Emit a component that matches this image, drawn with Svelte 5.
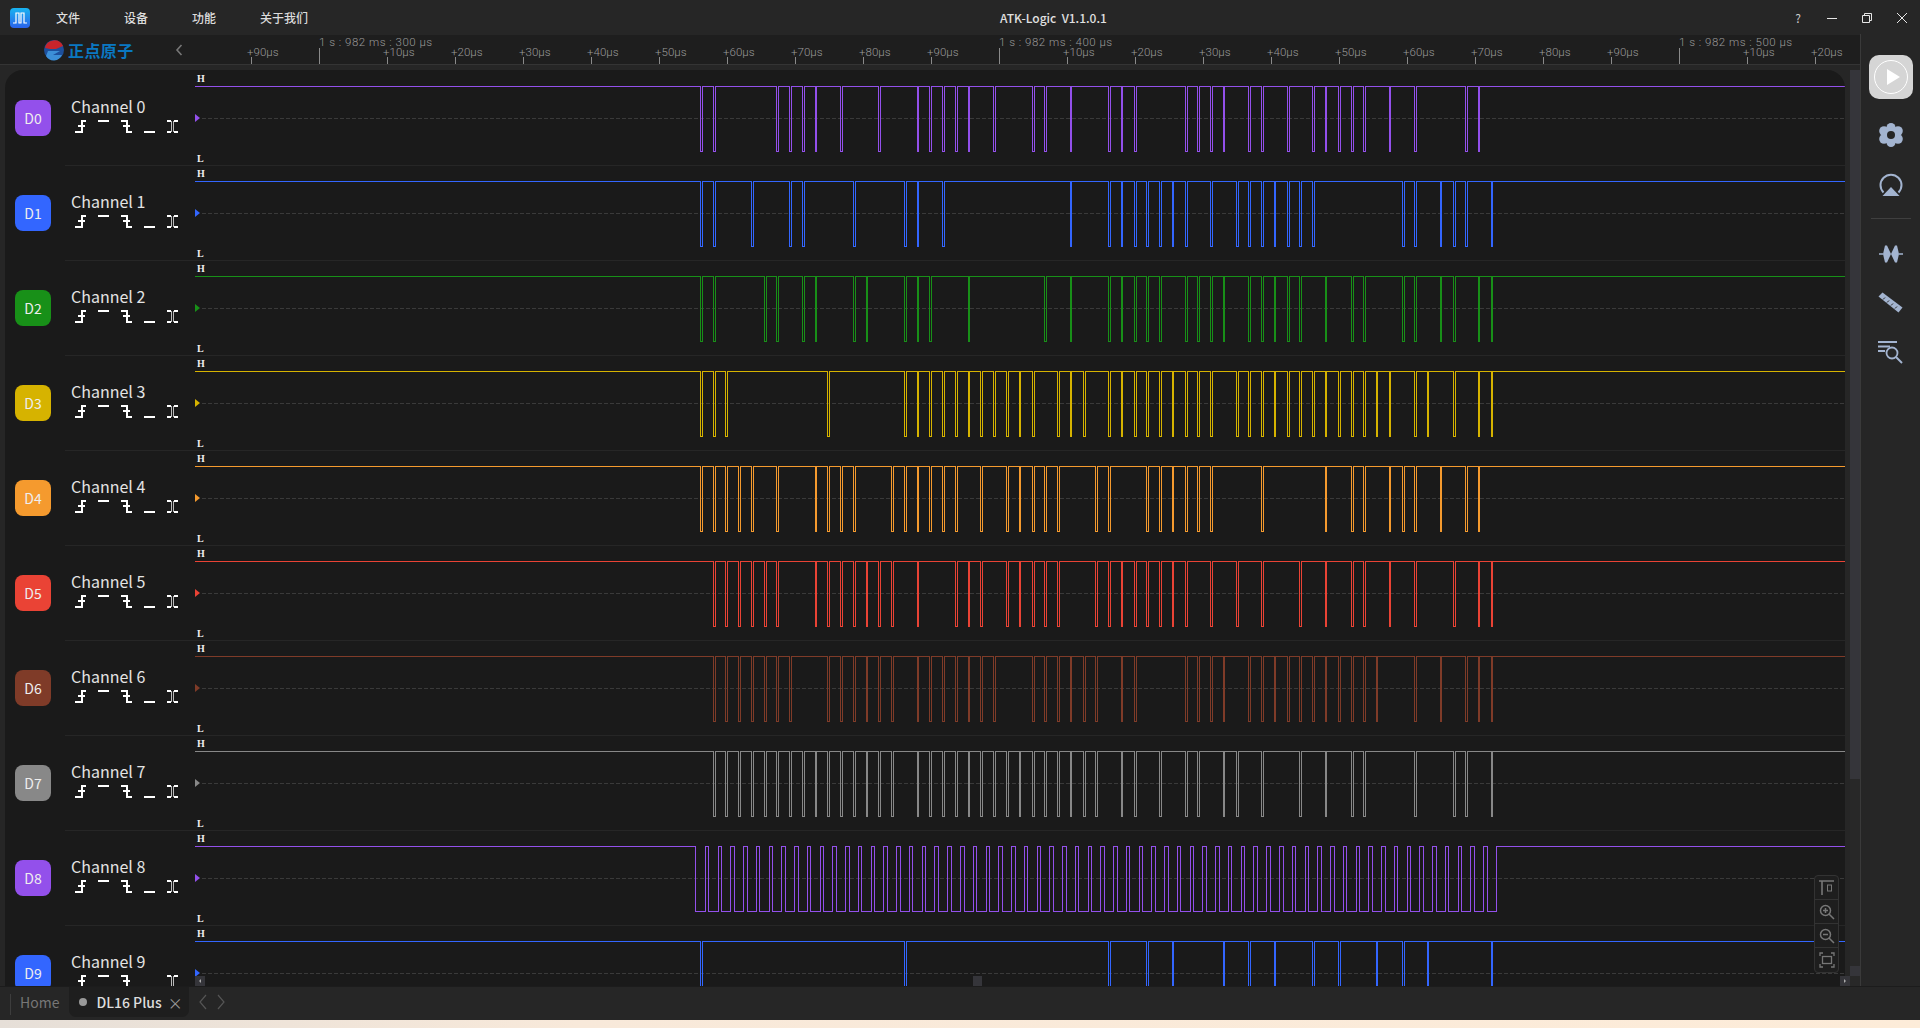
<script>
	const WAVE_LEFT = 195;
	const HIGH = 16.5;
	const LOW = 81.5;
	const WAVE_W = 1650;

	function r(a, b) {
		const out = [];
		for (let i = a; i <= b; i++) out.push(i);
		return out;
	}

	const channels = [
		{ name: 'Channel 0', tag: 'D0', color: '#9350eb', k: [0,1,6,7,8,9,11,14,17,18,19,20,21,23,26,27,29,32,33,34,38,39,40,41,43,44,46,48,49,50,51,52,54,56,60,61] },
		{ name: 'Channel 1', tag: 'D1', color: '#3366ff', k: [0,1,4,7,8,12,16,17,19,29,32,33,34,35,36,37,38,40,42,43,44,45,46,47,48,55,56,58,59,60,62] },
		{ name: 'Channel 2', tag: 'D2', color: '#189018', k: [0,1,5,6,8,9,12,13,16,17,18,21,27,29,32,33,34,35,36,38,39,40,41,43,44,45,46,47,49,51,52,55,56,58,59,61,62] },
		{ name: 'Channel 3', tag: 'D3', color: '#d6b300', k: [0,1,2,10,16,17,18,19,20,21,22,23,24,25,26,28,29,30,32,33,34,35,36,37,38,39,40,42,43,44,45,46,47,48,49,50,51,52,53,54,56,57,59,61,62] },
		{ name: 'Channel 4', tag: 'D4', color: '#f59a2e', k: [0,1,2,3,4,6,9,10,11,12,15,16,17,18,19,20,22,24,25,26,27,28,31,32,35,36,37,38,39,40,44,49,51,52,54,55,56,58,60,61] },
		{ name: 'Channel 5', tag: 'D5', color: '#ea4335', k: [1,2,3,4,5,6,9,10,11,12,13,14,15,17,20,21,22,24,25,26,27,28,31,32,33,34,35,36,37,38,40,42,44,47,49,51,52,54,56,59,61,62] },
		{ name: 'Channel 6', tag: 'D6', color: '#7f3b28', k: [1,2,3,4,5,6,7,10,11,12,13,14,15,17,18,19,20,21,22,23,26,27,28,29,30,31,33,34,38,39,40,41,43,44,45,46,47,48,49,50,51,52,53,56,58,60,61,62] },
		{ name: 'Channel 7', tag: 'D7', color: '#888888', k: [...r(1, 15), ...r(17, 31), 33,34,36,38,39,41,42,44,47,49,51,52,56,59,60,62] },
		{ name: 'Channel 8', tag: 'D8', color: '#9350eb', clock: true },
		{ name: 'Channel 9', tag: 'D9', color: '#3366ff', k: [0,16,32,35,37,41,43,45,48,50,53,55,57,62] }
	];

	// narrow pulses collapse into a solid 2px bar at this zoom level
	function isSolid(k) {
		return (k >= 9 && k % 4 === 1) || (k >= 54 && k % 4 === 2);
	}

	function pulsePath(list) {
		let d = `M0 ${HIGH}`;
		for (const k of list) {
			const x = Math.floor(700.25 + 12.76 * k) - WAVE_LEFT + 0.5;
			const w = isSolid(k) ? 1 : 2;
			d += `H${x}V${LOW}H${x + w}V${HIGH}`;
		}
		return d + `H${WAVE_W}`;
	}

	function clockPath() {
		let d = `M0 ${HIGH}H${695.5 - WAVE_LEFT}V${LOW}`;
		for (let j = 0; j < 62; j++) {
			const up = Math.floor(705.3 + 12.76 * j) - WAVE_LEFT + 0.5;
			const down = Math.floor(708.8 + 12.76 * j) - WAVE_LEFT + 0.5;
			d += `H${up}V${HIGH}H${down}V${LOW}`;
		}
		const last = Math.floor(705.3 + 12.76 * 62) - WAVE_LEFT + 0.5;
		return d + `H${last}V${HIGH}H${WAVE_W}`;
	}

	const ticks = r(0, 23).map((n) => {
		const x = 56.5 + 68 * n;
		const major = (n - 1) % 10 === 0;
		const value = (((n - 1) % 10) + 10) % 10;
		return { x, major, label: `+${value}0µs` };
	});
	const majors = [
		{ x: 124, label: '1 s : 982 ms : 300 µs' },
		{ x: 804, label: '1 s : 982 ms : 400 µs' },
		{ x: 1484, label: '1 s : 982 ms : 500 µs' }
	];
</script>

<div class="app">
	<header class="titlebar">
		<svg class="app-icon" width="20" height="20" viewBox="0 0 20 20">
			<defs>
				<linearGradient id="appblue" x1="0" y1="0" x2="0" y2="1">
					<stop offset="0" stop-color="#18b4f0" />
					<stop offset="1" stop-color="#2a62ea" />
				</linearGradient>
			</defs>
			<rect width="20" height="20" rx="4" fill="url(#appblue)" />
			<path d="M3 15h3V5h3v10h2V5h3v10h3" fill="none" stroke="#fff" stroke-width="1.2" />
		</svg>
		<nav class="menu">
			<span>文件</span>
			<span>设备</span>
			<span>功能</span>
			<span>关于我们</span>
		</nav>
		<div class="title">ATK-Logic&nbsp; V1.1.0.1</div>
		<div class="winctl">
			<span class="help">?</span>
			<svg width="12" height="12" viewBox="0 0 12 12"><path d="M1 6.5h10" stroke="#e6e6e6" fill="none" /></svg>
			<svg width="12" height="12" viewBox="0 0 12 12"><path d="M1.5 3.5h7v7h-7zM3.5 3.5v-2h7v7h-2" stroke="#e6e6e6" fill="none" /></svg>
			<svg width="12" height="12" viewBox="0 0 12 12"><path d="M1 1l10 10M11 1L1 11" stroke="#e6e6e6" fill="none" /></svg>
		</div>
	</header>

	<div class="body">
		<main class="main">
			<div class="ruler">
				<div class="brand">
					<svg width="22" height="22" viewBox="0 0 22 22">
						<circle cx="11" cy="11" r="10" fill="#1d4f9c" />
						<path d="M2 9a9.5 9.5 0 0 1 18-2L13 10H7z" fill="#c8242c" />
						<path d="M5 12h12l-7 4h9a9 9 0 0 1-16 1z" fill="#3c8fd8" />
					</svg>
					<span class="brand-name">正点原子</span>
					<svg class="collapse" width="8" height="12" viewBox="0 0 8 12"><path d="M6.5 1L2 6l4.500 5" fill="none" stroke="#777" stroke-width="1.600" /></svg>
				</div>
				<svg class="scale" width="1665" height="30">
					{#each ticks as t}
						<line x1={t.x} x2={t.x} y1={t.major ? 13 : 22} y2="29" stroke="#8a8a8a" />
						{#if !t.major}
							<text x={t.x - 4.500} y="20.500" class="tick-label">{t.label}</text>
						{/if}
					{/each}
					{#each majors as m}
						<text x={m.x} y="10.500" class="major-label">{m.label}</text>
					{/each}
				</svg>
			</div>

			<div class="viewport">
				<div class="panel">
					{#each channels as ch}
						<section class="row">
							<div class="badge" style:background={ch.color}>{ch.tag}</div>
							<div class="row-body">
								<div class="info">
									<div class="name">{ch.name}</div>
									<div class="triggers">
										<svg width="12" height="13" viewBox="0 0 12 13"><path d="M0 12h7V1h4M3 6h7" fill="none" stroke="#fff" stroke-width="2" /></svg>
										<svg width="12" height="13" viewBox="0 0 12 13"><path d="M0 1h11" fill="none" stroke="#fff" stroke-width="2" /></svg>
										<svg width="12" height="13" viewBox="0 0 12 13"><path d="M0 1h6v11h5M2 6h7" fill="none" stroke="#fff" stroke-width="2" /></svg>
										<svg width="12" height="13" viewBox="0 0 12 13"><path d="M0 12h11" fill="none" stroke="#fff" stroke-width="2" /></svg>
										<svg width="12" height="13" viewBox="0 0 12 13"><path d="M0 1h4M7 1h4M0 12h4M7 12h4" fill="none" stroke="#fff" stroke-width="2" /><path d="M4.500 1v11M6.500 1v11" fill="none" stroke="#bbb" /></svg>
									</div>
								</div>
								<div class="wave">
									<span class="level level-h">H</span>
									<span class="level level-l">L</span>
									<svg width="1650" height="95">
										<line x1="7" x2="1650" y1="48.500" y2="48.500" class="mid" />
										<path d="M0 44v8l5-4z" fill={ch.color} />
										<path d={ch.clock ? clockPath() : pulsePath(ch.k)} fill="none" stroke={ch.color} class="trace" />
									</svg>
								</div>
							</div>
						</section>
					{/each}

					<div class="tools">
						<button aria-label="Home marker">
							<svg width="16" height="16" viewBox="0 0 16 16"><path d="M0 1h15M3 1v14" fill="none" stroke="#777" stroke-width="1.600" /><rect x="8.500" y="5" width="4" height="6" fill="none" stroke="#777" /></svg>
						</button>
						<button aria-label="Zoom in">
							<svg width="16" height="16" viewBox="0 0 16 16"><circle cx="6.500" cy="6.500" r="5" fill="none" stroke="#777" stroke-width="1.500" /><path d="M10 10l5 5M4 6.500h5M6.500 4v5" fill="none" stroke="#777" stroke-width="1.500" /></svg>
						</button>
						<button aria-label="Zoom out">
							<svg width="16" height="16" viewBox="0 0 16 16"><circle cx="6.500" cy="6.500" r="5" fill="none" stroke="#777" stroke-width="1.500" /><path d="M10 10l5 5M4 6.500h5" fill="none" stroke="#777" stroke-width="1.500" /></svg>
						</button>
						<button aria-label="Fit">
							<svg width="16" height="16" viewBox="0 0 16 16"><path d="M1 4V1h3M12 1h3v3M15 12v3h-3M4 15H1v-3" fill="none" stroke="#777" stroke-width="1.300" /><rect x="3.500" y="4.500" width="9" height="7" fill="none" stroke="#777" stroke-width="1.300" /></svg>
						</button>
					</div>
				</div>
				<div class="vscroll">
					<span class="varrow up"></span>
					<span class="vthumb"></span>
					<span class="varrow down"></span>
				</div>
				<div class="hbar">
					<span class="harrow left"></span>
					<span class="hthumb"></span>
					<span class="harrow right"></span>
				</div>
			</div>
		</main>

		<aside class="sidebar">
			<button class="run" aria-label="Run">
				<svg width="44" height="44" viewBox="0 0 44 44">
					<circle cx="22" cy="22" r="16.500" fill="none" stroke="#fff" />
					<path d="M18 14v16l13-8z" fill="#fff" />
				</svg>
			</button>
			<svg class="tool gear" width="28" height="28" viewBox="0 0 28 28">
				<g fill="#a3b4d0">
					<circle cx="14" cy="6.500" r="4.500" />
					<circle cx="14" cy="21.500" r="4.500" />
					<circle cx="7" cy="10" r="4.800" />
					<circle cx="21" cy="10" r="4.800" />
					<circle cx="7" cy="18" r="4.800" />
					<circle cx="21" cy="18" r="4.800" />
					<circle cx="14" cy="14" r="7.500" />
				</g>
				<circle cx="14" cy="14" r="4" fill="#262626" />
			</svg>
			<svg class="tool ring" width="28" height="28" viewBox="0 0 28 28">
				<path d="M6.500 21.500a10.500 10.500 0 1 1 15 0" fill="none" stroke="#a3b4d0" stroke-width="2" />
				<path d="M14 16l8.500 9h-17z" fill="#a3b4d0" />
			</svg>
			<div class="divider"></div>
			<svg class="tool" width="28" height="28" viewBox="0 0 28 28">
				<path d="M6 14L8 5.500h2L14 14l-4 8.500H8zM14 14l4-8.500h2L22 14l-2 8.500h-2z" fill="#a3b4d0" />
				<path d="M2 14h4M22 14h4" stroke="#a3b4d0" stroke-width="1.500" fill="none" />
			</svg>
			<svg class="tool" width="28" height="28" viewBox="0 0 28 28">
				<path d="M1.500 7.500l4-4 20 15-4 5z" fill="#a3b4d0" />
				<path d="M6 10.500l2-2M10 13.500l2-2M14 16.500l2-2M18 19.500l2-2" stroke="#262626" fill="none" />
			</svg>
			<svg class="tool" width="28" height="28" viewBox="0 0 28 28">
				<path d="M1 4h19M1 8.500h12M1 13h7" stroke="#a3b4d0" stroke-width="1.800" fill="none" />
				<circle cx="15" cy="15" r="5.500" fill="none" stroke="#a3b4d0" stroke-width="1.800" />
				<path d="M19 19l6 6" stroke="#a3b4d0" stroke-width="2" fill="none" />
			</svg>
		</aside>
	</div>

	<footer class="tabs">
		<span class="tab-sep"></span>
		<span class="home">Home</span>
		<div class="tab">
			<span class="dot"></span>
			<span class="tab-name">DL16 Plus</span>
			<span class="close">×</span>
		</div>
		<svg width="26" height="16" viewBox="0 0 26 16" class="arrows"><path d="M7 1L1 8l6 7M19 1l6 7-6 7" fill="none" stroke="#555" stroke-width="1.200" /></svg>
	</footer>
	<div class="desktop"></div>
</div>

<style>
	:global(body) {
		background: #262626;
		overflow: hidden;
	}

	button {
		padding: 0;
		border: 0;
		background: none;
	}

	.app {
		display: flex;
		flex-direction: column;
		width: 1920px;
		height: 1028px;
		overflow: hidden;
		background: #262626;
		color: #ddd;
		font-family: 'Noto Sans CJK SC', 'Noto Sans', sans-serif;
	}

	.titlebar {
		position: relative;
		display: flex;
		flex: none;
		align-items: center;
		height: 35px;
		padding-left: 10px;
		font-size: 12px;
	}

	.menu {
		display: flex;
		gap: 44px;
		margin-left: 26px;
		font-weight: 500;
		color: #dcdcdc;
	}

	.title {
		position: absolute;
		left: 1000px;
		top: 9px;
		line-height: 17px;
		font-weight: 500;
		color: #e0e0e0;
	}

	.winctl {
		display: flex;
		align-items: center;
		gap: 23px;
		margin-left: auto;
		padding-right: 12px;
	}

	.help {
		margin-right: 2px;
		font-size: 12px;
		color: #ccc;
	}

	.body {
		display: flex;
		flex: none;
		height: 951px;
	}

	.main {
		display: flex;
		flex-direction: column;
		width: 1860px;
	}

	.ruler {
		display: flex;
		flex: none;
		height: 30px;
		background: #1e1e1e;
		border-bottom: 1px solid #343434;
		box-sizing: border-box;
	}

	.brand {
		display: flex;
		align-items: center;
		flex: none;
		width: 195px;
		padding-left: 43px;
		box-sizing: border-box;
	}

	.brand-name {
		margin-left: 3px;
		font-size: 16px;
		font-weight: 700;
		letter-spacing: 0.4px;
		color: #0a78c2;
	}

	.collapse {
		margin-left: 41px;
	}

	.tick-label,
	.major-label {
		font-family: Roboto, sans-serif;
		font-size: 11.500px;
		font-weight: 300;
		fill: #9a9a9a;
	}

	.major-label {
		letter-spacing: 0.5px;
	}

	.viewport {
		position: relative;
		display: flex;
		flex: 1;
		min-height: 0;
		padding: 5px 0 0 5px;
		background: #262626;
	}

	.panel {
		position: relative;
		flex: none;
		width: 1840px;
		overflow: hidden;
		background: #1a1a1a;
		border-radius: 18px 18px 0 0;
	}

	.row {
		display: flex;
		align-items: flex-start;
		height: 95px;
	}

	.badge {
		flex: none;
		width: 36px;
		height: 36px;
		margin: 30px 0 0 10px;
		border-radius: 8px;
		font-size: 14px;
		line-height: 36px;
		text-align: center;
		color: #eee;
	}

	.row-body {
		display: flex;
		flex: 1;
		height: 95px;
		margin-left: 14px;
		box-shadow: 0 1px 0 #262626;
	}

	.info {
		flex: none;
		width: 130px;
		padding: 26px 0 0 6px;
		box-sizing: border-box;
	}

	.name {
		font-size: 16px;
		line-height: 20px;
		color: #e4e4e4;
	}

	.triggers {
		display: flex;
		gap: 11px;
		margin: 4px 0 0 4px;
	}

	.triggers svg,
	.trace,
	.scale line {
		shape-rendering: crispEdges;
	}

	.wave {
		position: relative;
		flex: none;
		width: 1650px;
	}

	.wave svg {
		display: block;
	}

	.level {
		position: absolute;
		left: 2px;
		font-family: 'Liberation Serif', serif;
		font-size: 10px;
		font-weight: 700;
		line-height: 9px;
		color: #f0f0f0;
	}

	.level-h {
		top: 4px;
	}

	.level-l {
		top: 84px;
	}

	.mid {
		stroke: #3a3a3a;
		stroke-dasharray: 4 2;
	}

	.tools {
		position: absolute;
		left: 1809px;
		top: 805px;
		display: flex;
		flex-direction: column;
		width: 23px;
		background: #1e1e1e;
		border: 1px solid #333;
		border-radius: 4px;
	}

	.tools button {
		display: flex;
		align-items: center;
		justify-content: center;
		height: 24px;
		border-bottom: 1px solid #333;
	}

	.tools button:last-child {
		border-bottom: 0;
	}

	.hbar {
		position: absolute;
		left: 195px;
		right: 10px;
		bottom: 0;
		display: flex;
		justify-content: space-between;
		height: 10px;
	}

	.harrow {
		display: flex;
		align-items: center;
		justify-content: center;
		width: 10px;
		background: #35353a;
	}

	.harrow::after {
		content: '';
		border: 2.500px solid transparent;
	}

	.harrow.left::after {
		border-right-color: #aaa;
		border-left-width: 0;
	}

	.harrow.right::after {
		border-left-color: #aaa;
		border-right-width: 0;
	}

	.hthumb {
		width: 9px;
		margin-left: -91px;
		background: #35353a;
	}

	.vscroll {
		display: flex;
		flex-direction: column;
		flex: none;
		width: 10px;
		margin-left: 5px;
		background: #282828;
	}

	.varrow {
		flex: none;
		height: 10px;
		background: #35353a;
	}

	.vthumb {
		flex: none;
		height: 699px;
		background: #35353a;
	}

	.varrow.down {
		margin-top: auto;
		margin-bottom: 10px;
	}

	.sidebar {
		display: flex;
		flex-direction: column;
		align-items: center;
		flex: none;
		width: 60px;
		margin-top: -1px;
		border-left: 1px solid #3a3a3a;
		box-sizing: border-box;
	}

	.run {
		width: 44px;
		height: 44px;
		margin-top: 21px;
		background: #d5d5d5;
		border-radius: 10px;
	}

	.run svg {
		display: block;
	}

	.tool {
		margin-top: 21px;
	}

	.tool.gear {
		margin-top: 22px;
	}

	.tool.ring {
		margin-top: 22px;
	}

	.divider {
		width: 40px;
		height: 1px;
		margin-top: 19px;
		background: #3f3f3f;
	}

	.tabs {
		display: flex;
		align-items: flex-start;
		flex: none;
		height: 34px;
		border-top: 1px solid #1c1c1c;
		box-sizing: border-box;
		background: #262626;
	}

	.tab-sep {
		width: 1px;
		height: 21px;
		margin: 7px 0 0 10px;
		background: #3d3d3d;
	}

	.home {
		margin: 5px 0 0 9px;
		font-size: 14px;
		line-height: 20px;
		color: #777;
	}

	.tab {
		display: flex;
		align-items: center;
		width: 120px;
		height: 30px;
		margin-left: 10px;
		padding-left: 10px;
		box-sizing: border-box;
		background: #1e1e1e;
		border-radius: 0 0 7px 7px;
	}

	.dot {
		width: 8px;
		height: 8px;
		border-radius: 50%;
		background: #999;
	}

	.tab-name {
		margin-left: 9px;
		font-size: 14px;
		font-weight: 500;
		color: #ddd;
	}

	.close {
		margin-left: 6px;
		font-size: 15px;
		color: #999;
	}

	.arrows {
		margin: 7px 0 0 10px;
	}

	.desktop {
		flex: 1;
		background: linear-gradient(90deg, #e6dfd8, #f8e9da 30%, #fdecd9);
	}
</style>
